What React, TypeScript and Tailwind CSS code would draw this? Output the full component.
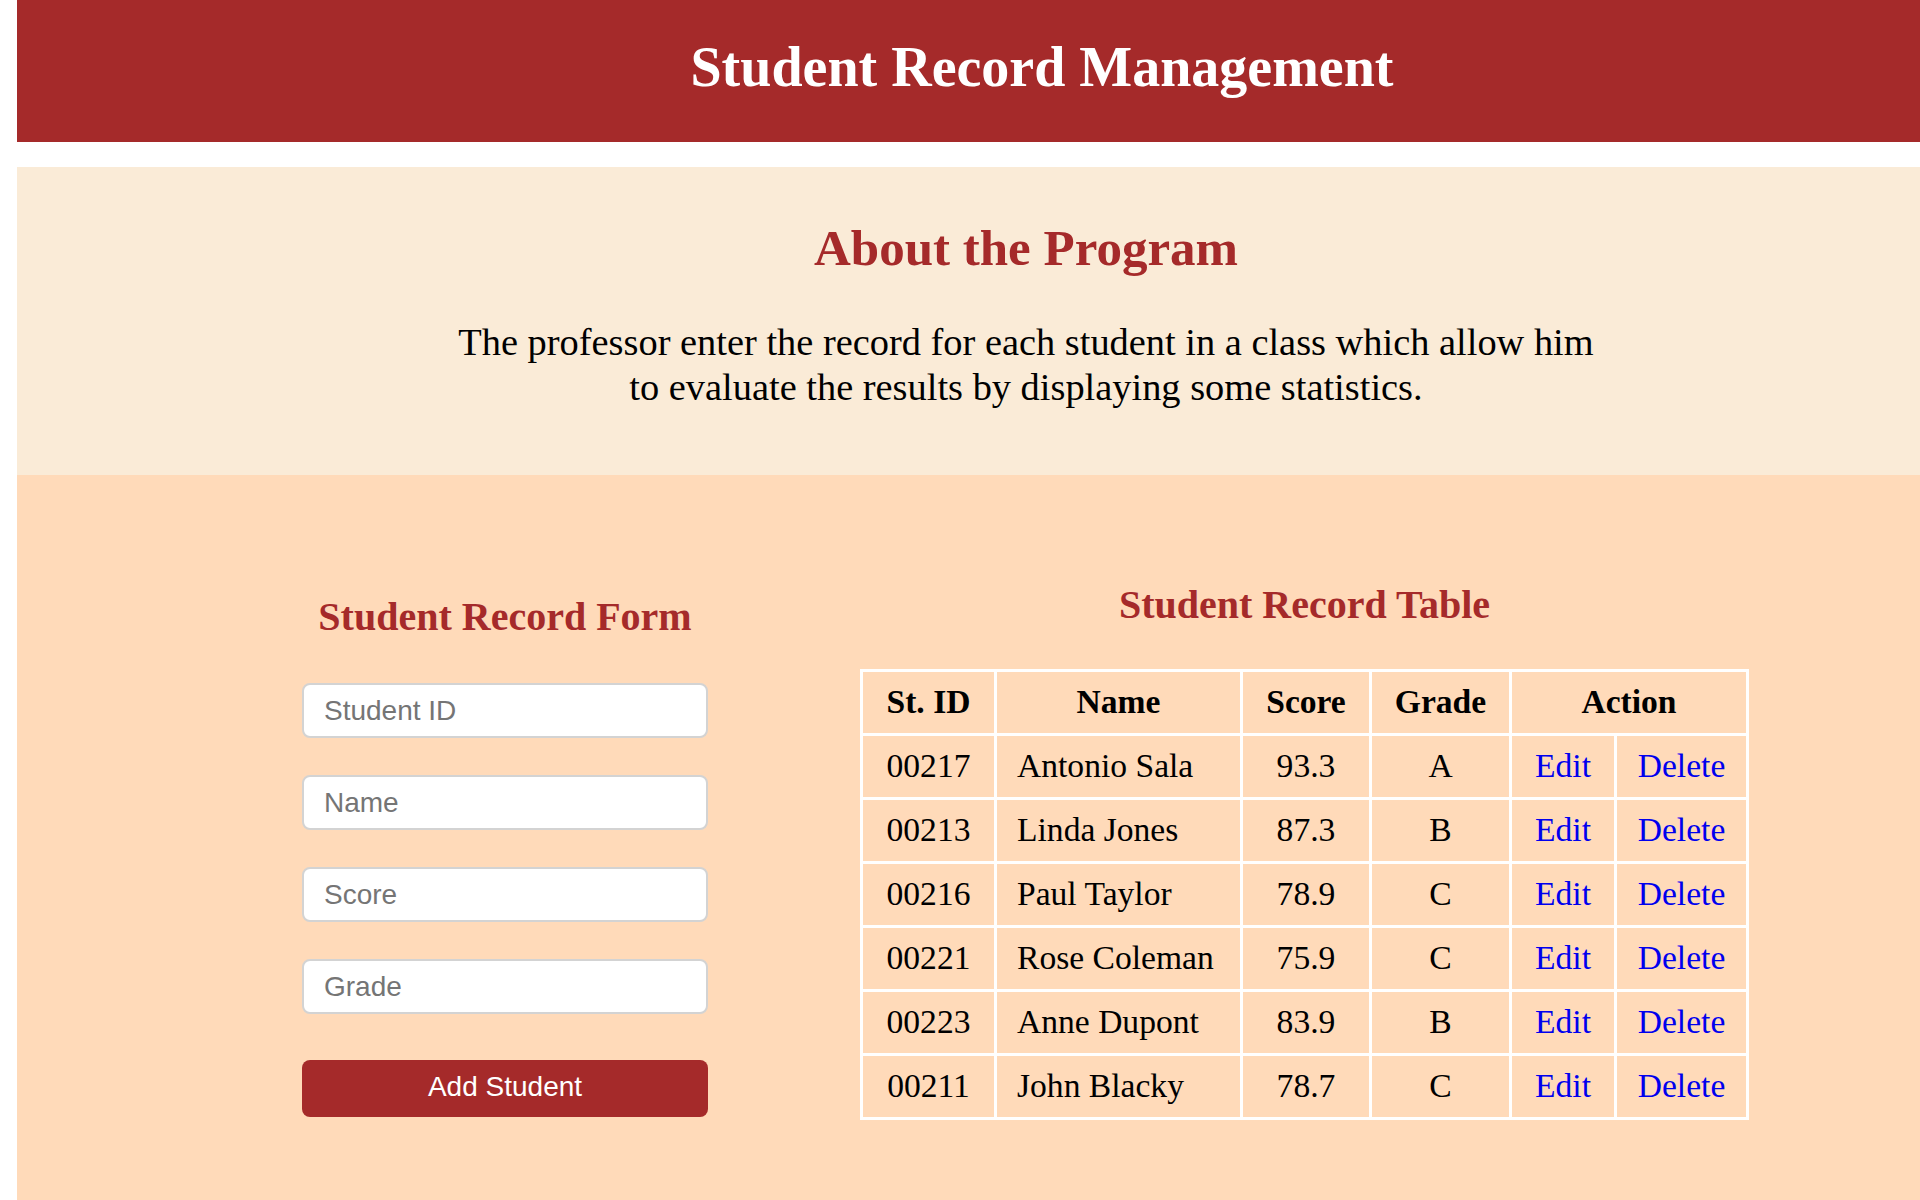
import { useState } from 'react'

type Student = { id: string; name: string; score: string; grade: string }

const initialStudents: Student[] = [
  { id: '00217', name: 'Antonio Sala', score: '93.3', grade: 'A' },
  { id: '00213', name: 'Linda Jones', score: '87.3', grade: 'B' },
  { id: '00216', name: 'Paul Taylor', score: '78.9', grade: 'C' },
  { id: '00221', name: 'Rose Coleman', score: '75.9', grade: 'C' },
  { id: '00223', name: 'Anne Dupont', score: '83.9', grade: 'B' },
  { id: '00211', name: 'John Blacky', score: '78.7', grade: 'C' },
]

const inputClass =
  "block w-full h-[55px] bg-white border-2 border-[#d3d3d3] rounded-[8px] px-[20px] text-[28px] text-black font-['Liberation_Sans',Arial,sans-serif] placeholder:text-[#757575] outline-none"

const cellClass = 'h-[61px] p-0 bg-[#ffdab9] align-middle'

const App = () => {
  const [students] = useState<Student[]>(initialStudents)

  return (
    <div className="min-h-screen bg-white overflow-hidden">
      <div className="ml-[17px] w-[2018px] min-h-screen flex flex-col font-['Liberation_Serif','Times_New_Roman',serif]">
        <header className="h-[142px] bg-[#a52a2a] flex items-center justify-center pl-[32px]">
          <h1 className="text-[56px] leading-[64px] font-bold text-white -mt-[8px]">Student Record Management</h1>
        </header>

        <section className="mt-[25px] bg-[#faebd7] pt-[52px] pb-[65px] text-center">
          <h2 className="text-[51px] leading-[59px] font-bold text-[#a52a2a]">About the Program</h2>
          <p className="mt-[42px] w-[1160px] mx-auto text-[38.4px] leading-[45px] text-black">
            The professor enter the record for each student in a class which allow him to evaluate the results by displaying some statistics.
          </p>
        </section>

        <section className="flex-1 bg-[#ffdab9] flex items-start pl-[285px] gap-[152px]">
          <div className="w-[406px] pt-[119px]">
            <h2 className="text-[40px] leading-[46px] font-bold text-[#a52a2a] text-center mb-[43px]">Student Record Form</h2>
            <div className="flex flex-col gap-[37px]">
              <input className={inputClass} placeholder="Student ID" />
              <input className={inputClass} placeholder="Name" />
              <input className={inputClass} placeholder="Score" />
              <input className={inputClass} placeholder="Grade" />
            </div>
            <button className="mt-[46px] w-full h-[57px] rounded-[8px] bg-[#a52a2a] text-white text-[28px] leading-[32px] pb-[3px] font-['Liberation_Sans',Arial,sans-serif]">
              Add Student
            </button>
          </div>

          <div className="pt-[107px] flex flex-col items-center">
            <h2 className="text-[40px] leading-[46px] font-bold text-[#a52a2a] mb-[41px]">Student Record Table</h2>
            <table className="bg-white border-separate border-spacing-[3px] text-[33.6px] text-black">
              <colgroup>
                <col className="w-[131px]" />
                <col className="w-[243px]" />
                <col className="w-[126px]" />
                <col className="w-[137px]" />
                <col className="w-[102px]" />
                <col className="w-[129px]" />
              </colgroup>
              <thead>
                <tr>
                  <th className={cellClass + ' font-bold'}>St. ID</th>
                  <th className={cellClass + ' font-bold'}>Name</th>
                  <th className={cellClass + ' font-bold'}>Score</th>
                  <th className={cellClass + ' font-bold'}>Grade</th>
                  <th className={cellClass + ' font-bold'} colSpan={2}>Action</th>
                </tr>
              </thead>
              <tbody>
                {students.map(s => (
                  <tr key={s.id}>
                    <td className={cellClass + ' text-center'}>{s.id}</td>
                    <td className={cellClass + ' text-left pl-[20px]'}>{s.name}</td>
                    <td className={cellClass + ' text-center'}>{s.score}</td>
                    <td className={cellClass + ' text-center'}>{s.grade}</td>
                    <td className={cellClass + ' text-center'}>
                      <a href="#" className="text-[#0000ee]">Edit</a>
                    </td>
                    <td className={cellClass + ' text-center'}>
                      <a href="#" className="text-[#0000ee]">Delete</a>
                    </td>
                  </tr>
                ))}
              </tbody>
            </table>
          </div>
        </section>
      </div>
    </div>
  )
}

export default App
